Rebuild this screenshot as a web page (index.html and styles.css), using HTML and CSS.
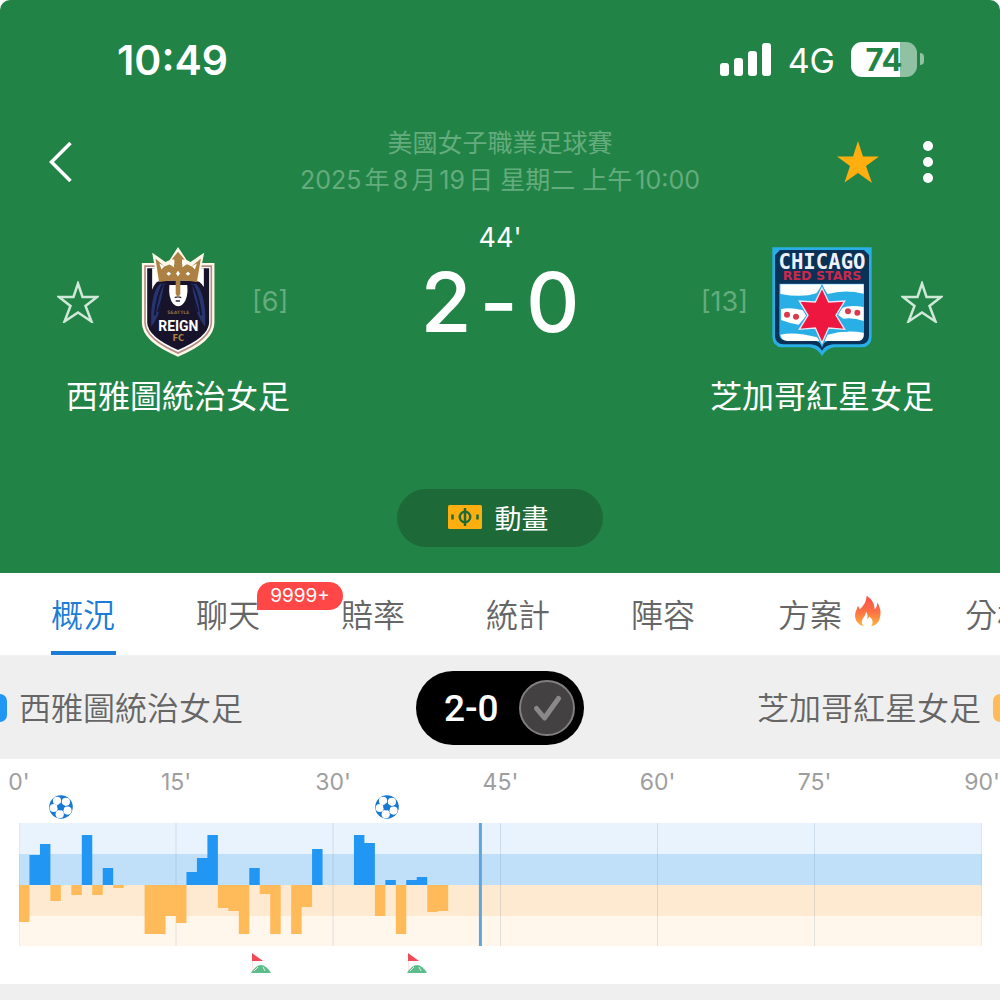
FILE: index.html
```html
<!DOCTYPE html>
<html lang="zh-Hant">
<head>
<meta charset="utf-8">
<meta name="viewport" content="width=device-width, initial-scale=1">
<title>西雅圖統治女足 2-0 芝加哥紅星女足</title>
<link rel="stylesheet" href="styles.css">
</head>
<body>
<header class="hero">
  <div class="status">
    <time class="clock">10:49</time>
    <div class="status-right">
      <svg class="signal" viewBox="0 0 52 33" aria-hidden="true"><rect x="0" y="20" width="9" height="13" rx="3"/><rect x="14" y="15" width="9" height="18" rx="3"/><rect x="28" y="8" width="9" height="25" rx="3"/><rect x="42" y="0" width="9" height="33" rx="3"/></svg>
      <span class="network">4G</span>
      <div class="battery-wrap"><span class="battery">74</span><i class="battery-nub"></i></div>
    </div>
  </div>

  <div class="topbar">
    <button class="icon-btn" aria-label="返回"><svg width="24" height="40" viewBox="0 0 24 40"><path d="M22.500 1 L3.500 20 L22.500 39" fill="none" stroke="#fff" stroke-width="3.500"/></svg></button>
    <div class="league">
      <p>美國女子職業足球賽</p>
      <p>2025年8月19日 星期二 上午10:00</p>
    </div>
    <div class="actions">
      <button class="icon-btn" aria-label="已收藏"><svg width="42" height="42" viewBox="0 0 42 42"><path d="M21 0 L26 15.500 H42 L29 25 L35 42 L21 32 L7.500 41.500 L13 25 L0 15.500 H16 Z" fill="#ffae0f"/></svg></button>
      <button class="icon-btn" aria-label="更多"><svg width="12" height="44" viewBox="0 0 12 44" fill="#fff"><circle cx="6" cy="6" r="5"/><circle cx="6" cy="22" r="5"/><circle cx="6" cy="38" r="5"/></svg></button>
    </div>
  </div>

  <section class="match">
    <div class="team">
      <div class="team-row">
        <button class="icon-btn" aria-label="收藏主隊"><svg class="star" viewBox="0 0 42 42"><path d="M21 2.500 L25.500 16 H40 L28.500 25 L34.500 40.500 L21 31.500 L7.500 40.500 L13.500 25 L2 16 H16.500 Z"/></svg></button>
        <svg class="crest" viewBox="247 49 330 332" role="img" aria-label="Seattle Reign FC">
          <path d="M303 97 H522 V278 Q522 335 412 380 Q303 335 303 278 Z" fill="#fff8ea"/>
          <path d="M310 104 H515 V278 Q513 329 412 372 Q312 329 310 278 Z" fill="#b58d83"/>
          <path d="M315 109 H510 V278 Q508 325 412 366 Q317 325 315 278 Z" fill="#fff"/>
          <path d="M319 113 H506 V278 Q504 321 412 360 Q321 321 319 278 Z" fill="#17132b"/>
          <path d="M334 113 H490 V170 Q478 150 465 150 H360 Q345 150 334 178 Z" fill="#fff"/>
          <path d="M358 160 Q336 180 331 245 V290 Q362 252 375 160 Z M466 160 Q488 180 494 245 V290 Q462 252 448 160 Z" fill="#27356f"/>
          <path d="M366 162 Q350 190 342 255 M375 162 Q368 200 352 245 M456 162 Q474 190 482 255 M448 162 Q457 200 472 245" fill="none" stroke="#141535" stroke-width="6"/>
          <path d="M370 162 H454 Q463 205 464 250 H359 Q360 205 370 162 Z" fill="#17132b"/>
          <path d="M386 164 H440 Q444 204 427 221 Q413 235 398 221 Q382 204 386 164 Z" fill="#fff"/>
          <path d="M402 202 q10 -5 20 0 M405 212 h13" stroke="#2c2944" stroke-width="4" fill="none"/>
          <path d="M334 66 L350 153 Q412 142 474 153 L491 66 L450 94 L438 88 L412 49 L387 88 L374 94 Z" fill="#fff8ea"/>
          <path d="M344 84 L355 155 Q412 144 469 155 L481 84 L453 108 L438 100 H424 V87 H432 L412 63 L393 87 H401 V102 H386 L371 108 Z" fill="#ac8143"/>
          <path d="M356 99 l15 8 -9 10z M469 99 l-15 8 9 10z M386 101 l14 -8 v17z M439 101 l-14 -8 v17z" fill="#fff"/>
          <path d="M405 146 H419 V191 L412 202 L405 191 Z" fill="#ac8143"/>
          <path d="M377 130 l7 -6 7 6 -7 6z M435 130 l7 -6 7 6 -7 6z M412 121 l6 8 -6 9 -6 -9z" fill="#fff"/>
          <text x="413" y="251" class="crest-small">SEATTLE</text>
          <text x="413" y="302" class="crest-name">REIGN</text>
          <text x="413" y="332" class="crest-fc">FC</text>
        </svg>
        <span class="rank">[6]</span>
      </div>
      <h2>西雅圖統治女足</h2>
    </div>

    <div class="score-box">
      <p class="minute">44'</p>
      <p class="score"><span>2</span><span>-</span><span>0</span></p>
    </div>

    <div class="team">
      <div class="team-row">
        <span class="rank rank-away">[13]</span>
        <svg class="crest" viewBox="230 49 330 330" role="img" aria-label="Chicago Red Stars">
          <path d="M246 50 H544 V318 Q544 348 514 350 H432 Q408 353 395 377 Q382 353 358 350 H276 Q246 348 246 318 Z" fill="#29aee5"/>
          <path d="M269 58 H521 L536 73 V315 Q536 340 510 341 H428 Q404 344 395 360 Q386 344 362 341 H280 Q254 340 254 315 V73 Z" fill="#0b3156"/>
          <path d="M267 159 H521 V314 Q521 329 504 329 H421 Q405 331 395 345 Q385 331 369 329 H286 Q267 329 267 310 Z" fill="#29aee5"/>
          <path d="M270 161 H520 V189 Q462 175 412 190 L395 165 L378 188 Q337 202 270 190 Z" fill="#fff"/>
          <path d="M272 235 Q302 229 338 239 L348 256 L325 282 Q300 279 272 268 Z M520 229 Q480 221 452 233 L443 253 L459 264 Q490 260 520 271 Z" fill="#fff"/>
          <path d="M270 312 Q316 302 380 320 L395 340 L412 312 Q464 296 520 306 V315 Q517 332 500 331 H292 Q273 330 270 312 Z" fill="#fff"/>
          <path d="M395 159 L418 209 L474 205 L442 254 L474 303 L417 297 L395 351 L373 297 L316 303 L348 254 L316 205 L372 209 Z" fill="#29aee5"/>
          <path d="M395 172 L415 214 L463 211 L437 254 L463 296 L415 292 L395 337 L375 292 L327 296 L353 254 L327 211 L375 214 Z" fill="#ed1740" stroke="#f0e5f4" stroke-width="4"/>
          <g fill="#da3a4c"><circle cx="290" cy="252" r="9"/><circle cx="317" cy="258" r="9"/><circle cx="473" cy="242" r="9"/><circle cx="501" cy="246" r="9"/></g>
          <text x="395" y="114" class="crest-city">CHICAGO</text>
          <text x="395" y="149" class="crest-stars">RED STARS</text>
        </svg>
        <button class="icon-btn" aria-label="收藏客隊"><svg class="star" viewBox="0 0 42 42"><path d="M21 2.500 L25.500 16 H40 L28.500 25 L34.500 40.500 L21 31.500 L7.500 40.500 L13.500 25 L2 16 H16.500 Z"/></svg></button>
      </div>
      <h2>芝加哥紅星女足</h2>
    </div>
  </section>

  <button class="animate">
    <svg width="34" height="24" viewBox="0 0 34 24" aria-hidden="true"><rect width="34" height="24" rx="1.500" fill="#ffae0f"/><g fill="none" stroke="#1e6a38" stroke-width="2.500"><circle cx="17" cy="12" r="5.200"/><path d="M17 3V21M4.500 9.500V14.500M29.500 9.500V14.500"/></g></svg>
    <span>動畫</span>
  </button>
</header>

<nav class="tabs">
  <a class="active" href="#overview">概況</a>
  <a href="#chat">聊天<span class="badge">9999+</span></a>
  <a href="#odds">賠率</a>
  <a href="#stats">統計</a>
  <a href="#lineup">陣容</a>
  <a class="tab-hot" href="#tips">方案<svg width="28" height="32" viewBox="1062 105 82 94" aria-hidden="true"><defs><linearGradient id="fire" x1="0" y1="0" x2="0" y2="1"><stop offset="0" stop-color="#ff4a4a"/><stop offset=".55" stop-color="#fb7544"/><stop offset="1" stop-color="#ffb53c"/></linearGradient></defs><path fill="url(#fire)" d="M1099 107 C1122 122 1121 138 1123 147 C1128 142 1130 136 1130 127 C1142 145 1143 165 1134 182 C1129 191 1120 196 1112 197 C1120 186 1117 176 1107 168 C1105 172 1103 174 1101 176 C1103 166 1101 158 1097 154 C1096 166 1087 172 1085 182 C1084 189 1087 194 1092 197 C1075 194 1064 180 1065 163 C1066 152 1071 146 1073 137 C1076 140 1078 143 1079 147 C1090 136 1098 126 1099 107 Z"/></svg></a>
  <a href="#analysis">分析</a>
</nav>

<main id="overview">
  <div class="legend">
    <div class="side home"><i class="marker"></i><span>西雅圖統治女足</span></div>
    <label class="toggle">
      <span>2-0</span>
      <span class="check">
        <input type="checkbox" aria-label="顯示比分">
        <svg viewBox="0 0 56 56" aria-hidden="true"><circle cx="28" cy="28" r="27" fill="#444142" stroke="#807e7f" stroke-width="2"/><path d="M17.500 28.500 L25.500 38 L39.500 18.500" fill="none" stroke="#8a8889" stroke-width="5" stroke-linecap="round" stroke-linejoin="round"/></svg>
      </span>
    </label>
    <div class="side away"><span>芝加哥紅星女足</span><i class="marker"></i></div>
  </div>

  <section class="momentum">
    <div class="axis"><span>0'</span><span>15'</span><span>30'</span><span>45'</span><span>60'</span><span>75'</span><span>90'</span></div>
    <svg class="defs" width="0" height="0" aria-hidden="true">
      <symbol id="ball" viewBox="0 0 24 24"><circle cx="12" cy="12" r="11.800" fill="#1978d4"/><g fill="#fff"><circle cx="8" cy="5.800" r="4.100"/><circle cx="16.900" cy="6.800" r="4.100"/><circle cx="18.500" cy="15.600" r="4.100"/><circle cx="10.700" cy="19.200" r="4.100"/><circle cx="4.700" cy="12.900" r="4"/></g><path d="M10.800 8.300 L15.300 10.200 L14.800 14.500 L10.600 15.600 L8 12 Z" fill="#1978d4"/></symbol>
      <symbol id="corner" viewBox="0 0 20 20"><path d="M1 0 L12 8 H1 Z" fill="#f04a58"/><path d="M1.500 8V18" stroke="#fde3e3" stroke-width="1"/><path d="M0 20 Q5 12 10 12 Q15 12 20 20 Z" fill="#5cbd8b"/><path d="M3 18 L7 14 M12 14 L14 18" stroke="#d8f1e4" stroke-width="1"/></symbol>
    </svg>
    <div class="events goals">
      <svg style="left:4.400%"><use href="#ball"/></svg>
      <svg style="left:38.200%"><use href="#ball"/></svg>
    </div>
    <svg class="chart" viewBox="0 0 92 123" preserveAspectRatio="none" role="img" aria-label="比賽走勢">
      <rect width="92" height="31" fill="#e8f3fd"/><rect y="31" width="92" height="31" fill="#c0e0fa"/><rect y="62" width="92" height="31" fill="#fdead0"/><rect y="93" width="92" height="30" fill="#fff7ec"/>
      <path class="lines" d="M0 0V123M15 0V123M30 0V123M46 0V123M61 0V123M76 0V123M92 0V123"/>
      <path fill="#2196f3" d="M1 62V32h1V62zM2 62V21h1V62zM6 62V12h1V62zM8 62V45h1V62zM16 62V49h1V62zM17 62V35h1V62zM18 62V12h1V62zM22 62V45h1V62zM28 62V26h1V62zM32 62V12h1V62zM33 62V20h1V62zM35 62V57h1V62zM37 62V57h1V62zM38 62V54h1V62z"/>
      <path fill="#ffba5a" d="M0 62V99h1V62zM3 62V78h1V62zM5 62V72h1V62zM7 62V72h1V62zM9 62V65h1V62zM12 62V111h2V62zM14 62V93h1V62zM15 62V100h1V62zM19 62V85h1V62zM20 62V88h1V62zM21 62V111h1V62zM23 62V71h1V62zM24 62V111h1V62zM26 62V111h1V62zM27 62V84h1V62zM34 62V93h1V62zM36 62V111h1V62zM39 62V89h1V62zM40 62V88h1V62z"/>
      <path class="now" d="M44.080 0V123"/>
    </svg>
    <div class="events corners">
      <svg style="left:25.100%"><use href="#corner"/></svg>
      <svg style="left:41.300%"><use href="#corner"/></svg>
    </div>
  </section>
</main>
</body>
</html>
```
FILE: styles.css
```css
* { box-sizing: border-box; }
body {
  margin: 0;
  min-height: 100vh;
  background: linear-gradient(#fff 500px, #efefef 500px);
  font-family: Inter, "Noto Sans CJK TC", sans-serif;
  text-autospace: normal;
  overflow-x: hidden;
}
h2, p { margin: 0; }
button { font: inherit; color: inherit; border: 0; background: none; padding: 0; cursor: pointer; }
svg { display: block; }

.hero {
  display: flex;
  flex-direction: column;
  padding-bottom: 26px;
  background: #228346;
  color: #fff;
  border-radius: 10px 10px 0 0;
}
.status {
  display: flex;
  justify-content: space-between;
  align-items: center;
  height: 120px;
  padding: 0 76px 0 117px;
}
.clock { font-size: 41px; font-weight: 600; line-height: 48px; }
.status-right { display: flex; align-items: center; gap: 16px; padding-bottom: 2px; }
.signal { width: 52px; height: 33px; fill: #fff; }
.network { font-size: 34px; line-height: 40px; padding-top: 4px; }
.battery-wrap { display: flex; align-items: center; gap: 3px; }
.battery {
  width: 66px;
  border-radius: 11px;
  background: linear-gradient(90deg, #fff 74%, #90c1a3 74%);
  color: #228346;
  font-size: 31px;
  font-weight: 700;
  line-height: 35px;
  text-align: center;
}
.battery-nub { width: 4px; height: 12px; border-radius: 0 6px 6px 0; background: #90c1a3; }

.topbar {
  display: grid;
  grid-template-columns: 1fr auto 1fr;
  align-items: center;
  padding: 5px 48px 0;
}
.topbar > .icon-btn { justify-self: start; }
.icon-btn { display: grid; place-items: center; }
.league {
  color: #64ac7d;
  font-size: 25px;
  font-weight: 400;
  line-height: 37px;
  text-align: center;
}
.actions { display: flex; align-items: center; justify-content: flex-end; gap: 43px; padding-right: 18px; }

.match { display: grid; grid-template-columns: 356fr 288fr 356fr; padding-top: 26px; }
.team { padding-top: 22px; text-align: center; }
.team-row {
  display: grid;
  grid-template-columns: 90px 110px 90px;
  justify-content: center;
  align-items: center;
}
.crest { width: 110px; height: 110px; }
.star { width: 42px; height: 42px; fill: none; stroke: #cfe8d8; stroke-width: 2.500; }
.rank { padding-left: 19px; font-size: 27px; line-height: 32px; color: #64ac7d; text-align: left; }
.rank-away { padding: 0 19px 0 0; text-align: right; }
.team h2 { margin-top: 16px; font-size: 32px; font-weight: 400; line-height: 48px; }
.score-box { text-align: center; }
.minute { padding-top: 1px; font-size: 27px; line-height: 24px; }
.score {
  display: flex;
  justify-content: center;
  gap: 8px;
  margin-top: 8px;
  font-size: 83px;
  font-weight: 500;
  line-height: 88px;
}
.crest text { text-anchor: middle; font-family: "DejaVu Sans", sans-serif; font-weight: 700; }
.crest .crest-small { font-size: 14px; fill: #8a693e; }
.crest .crest-name { font-family: "Liberation Sans Narrow", Roboto, sans-serif; font-size: 42px; fill: #fff; }
.crest .crest-fc { font-size: 25px; fill: #ac8143; }
.crest .crest-city { font-family: "DejaVu Sans Mono", monospace; font-size: 62px; fill: #eef1fa; }
.crest .crest-stars { font-size: 38px; fill: #c92a4b; }

.animate {
  display: flex;
  align-items: center;
  justify-content: center;
  gap: 13px;
  align-self: center;
  width: 206px;
  height: 58px;
  margin-top: 68px;
  padding: 0 4px 2px 0;
  border-radius: 29px;
  background: #1d6a38;
  font-size: 27px;
}

.tabs {
  display: flex;
  gap: 80px;
  height: 83px;
  padding-left: 51px;
  background: #fff;
  border-bottom: 1px solid #f3f3f3;
  overflow: hidden;
}
.tabs a {
  position: relative;
  flex: none;
  min-width: 65px;
  font-size: 32px;
  line-height: 86px;
  color: #666;
  text-decoration: none;
  font-weight: 350;
}
.tabs .active { color: #1c7cd6; box-shadow: inset 0 -4px #1c7cd6; }
.tabs .tab-hot { display: flex; gap: 12px; padding: 0 3px 0 2px; }
.tab-hot svg { margin-top: 22px; }
.badge {
  position: absolute;
  left: 61px;
  top: 9px;
  z-index: 1;
  width: 86px;
  border-radius: 14px 14px 14px 0;
  background: #ff4747;
  color: #fff;
  font-size: 19px;
  font-weight: 400;
  line-height: 28px;
  text-align: center;
}

.legend {
  display: grid;
  grid-template-columns: 1fr auto 1fr;
  align-items: center;
  height: 103px;
  background: #efefef;
  color: #666;
  font-size: 32px;
  font-weight: 350;
}
.side { display: flex; align-items: center; gap: 12px; }
.side span { padding-bottom: 4px; }
.away { justify-content: flex-end; }
.marker { width: 7px; height: 28px; background: #2196f3; border-radius: 0 7px 7px 0; }
.away .marker { background: #ffba5a; border-radius: 7px 0 0 7px; }
.toggle {
  display: flex;
  align-items: center;
  justify-content: space-between;
  width: 168px;
  height: 74px;
  padding: 0 9px 0 28px;
  border-radius: 37px;
  background: #000;
  color: #fff;
  font-family: Roboto, sans-serif;
  font-size: 37px;
  line-height: 48px;
  font-weight: 500;
}
.toggle > span:first-child { padding-top: 2px; }
.check { position: relative; width: 56px; height: 56px; }
.check input { position: absolute; inset: 0; width: 100%; height: 100%; margin: 0; opacity: 0; }

.momentum { padding: 0 18px 11px 19px; background: #fff; }
.defs { position: absolute; }
.axis {
  display: grid;
  grid-template-columns: 15fr 15fr 16fr 15fr 15fr 16fr 0fr;
  color: #9e9e9e;
  font-size: 23px;
  line-height: 36px;
  padding-top: 5px;
  height: 36px;
}
.axis span { display: flex; justify-content: center; width: 0; }
.events { position: relative; height: 28px; }
.events svg { position: absolute; width: 24px; height: 24px; margin-left: -12px; }
.chart { width: 100%; height: 123px; }
.lines { stroke: #6482a0; stroke-opacity: .2; vector-effect: non-scaling-stroke; }
.now { stroke: #5ea6dd; stroke-width: 3px; vector-effect: non-scaling-stroke; }
.corners { height: 27px; padding-top: 7px; }
.corners svg { width: 20px; height: 20px; margin-left: -10px; }
```
